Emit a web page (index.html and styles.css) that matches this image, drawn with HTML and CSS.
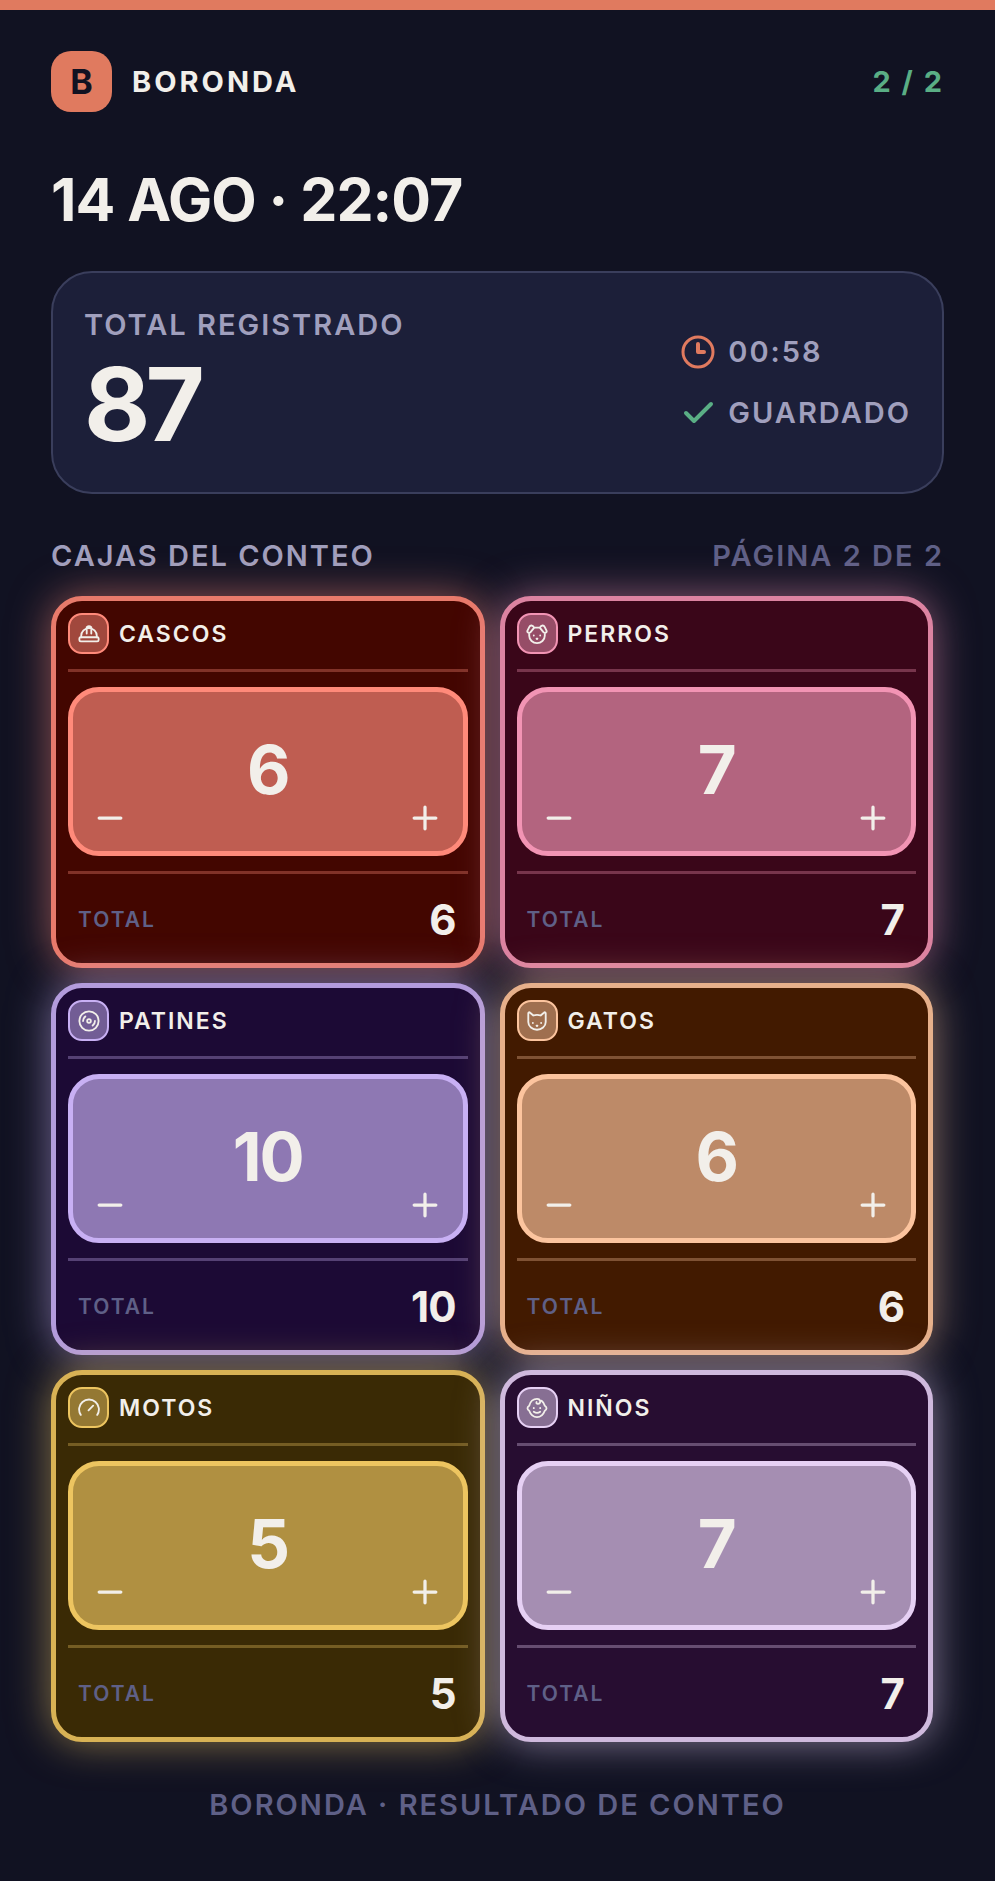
FILE: index.html
```html
<!DOCTYPE html>
<html lang="es">
<head>
    <meta charset="UTF-8">
    <meta name="viewport" content="width=device-width, initial-scale=1.0">
    <title>Boronda - Resultado de conteo</title>
    <link rel="stylesheet" href="styles.css">
</head>
<body>

<div class="page">
    <header class="header">
        <div class="brand">
            <span class="logo">B</span>
            <span class="brand-name">BORONDA</span>
        </div>
        <span class="page-count">2 / 2</span>
    </header>

    <h1>14 AGO · 22:07</h1>

    <section class="summary">
        <div>
            <div class="label">TOTAL REGISTRADO</div>
            <div class="summary-total">87</div>
        </div>
        <div class="meta">
            <div class="meta-row">
                <svg class="meta-icon clock" viewBox="0 0 34 34"><circle cx="17" cy="17" r="15"/><path d="M17 9v8h6"/></svg>
                <span>00:58</span>
            </div>
            <div class="meta-row">
                <svg class="meta-icon check" viewBox="0 0 34 34"><path d="M5 17l8 8L30 8"/></svg>
                <span>GUARDADO</span>
            </div>
        </div>
    </section>

    <div class="section-head">
        <h2>CAJAS DEL CONTEO</h2>
        <span>PÁGINA 2 DE 2</span>
    </div>

    <main class="grid">
        <article class="card red">
            <div class="card-head">
                <span class="card-icon"><svg viewBox="0 0 24 24"><rect x="1.5" y="15.5" width="21" height="4.5" rx="1.5"/><path d="M3.500 15.500v-1.500a8.500 8.500 0 0 1 17 0v1.500M9.500 11.500V4.500q2.500-2 5 0v7"/></svg></span>
                <h3>CASCOS</h3>
            </div>
            <div class="counter">
                <span class="count">6</span>
                <button type="button" class="minus" aria-label="Restar cascos"><svg viewBox="0 0 24 24"><path d="M2 12h20"/></svg></button>
                <button type="button" class="plus" aria-label="Sumar cascos"><svg viewBox="0 0 24 24"><path d="M2 12h20M12 2v20"/></svg></button>
            </div>
            <div class="card-total"><span>TOTAL</span><strong>6</strong></div>
        </article>

        <article class="card pink">
            <div class="card-head">
                <span class="card-icon"><svg viewBox="0 0 24 24"><path d="M9 5h6M9 5C7 1.500 4.500 2.500 3.500 4.500L1.500 8.500c-.5 2 2 3 3.500 1.500L9 5M15 5c2-3.500 4.500-2.500 5.500-.5l2 4c.5 2-2 3-3.500 1.500L15 5M3.500 11v3c0 4.500 4 8 8.500 8s8.500-3.500 8.500-8v-3"/><path d="M8.500 13.500v.2M15.500 13.500v.2M11.500 17h1l-.5.5z"/></svg></span>
                <h3>PERROS</h3>
            </div>
            <div class="counter">
                <span class="count">7</span>
                <button type="button" class="minus" aria-label="Restar perros"><svg viewBox="0 0 24 24"><path d="M2 12h20"/></svg></button>
                <button type="button" class="plus" aria-label="Sumar perros"><svg viewBox="0 0 24 24"><path d="M2 12h20M12 2v20"/></svg></button>
            </div>
            <div class="card-total"><span>TOTAL</span><strong>7</strong></div>
        </article>

        <article class="card purple">
            <div class="card-head">
                <span class="card-icon"><svg viewBox="0 0 24 24"><circle cx="12" cy="12" r="10.500"/><circle cx="12" cy="12" r="2"/><path d="M5.500 12Q5.500 9 8 7M18.500 12q0 3-2.500 5"/></svg></span>
                <h3>PATINES</h3>
            </div>
            <div class="counter">
                <span class="count">10</span>
                <button type="button" class="minus" aria-label="Restar patines"><svg viewBox="0 0 24 24"><path d="M2 12h20"/></svg></button>
                <button type="button" class="plus" aria-label="Sumar patines"><svg viewBox="0 0 24 24"><path d="M2 12h20M12 2v20"/></svg></button>
            </div>
            <div class="card-total"><span>TOTAL</span><strong>10</strong></div>
        </article>

        <article class="card orange">
            <div class="card-head">
                <span class="card-icon"><svg viewBox="0 0 24 24"><path d="M2.500 13V3.500c0-1 1-1.500 2-.5l3.500 3q4-1.500 8 0l3.500-3c1-1 2-.5 2 .5V13c0 5-4.500 8.500-9.500 8.500S2.500 18 2.500 13z"/><path d="M7.500 14v.2M16.500 14v.2M11.500 17h1l-.5.5z"/></svg></span>
                <h3>GATOS</h3>
            </div>
            <div class="counter">
                <span class="count">6</span>
                <button type="button" class="minus" aria-label="Restar gatos"><svg viewBox="0 0 24 24"><path d="M2 12h20"/></svg></button>
                <button type="button" class="plus" aria-label="Sumar gatos"><svg viewBox="0 0 24 24"><path d="M2 12h20M12 2v20"/></svg></button>
            </div>
            <div class="card-total"><span>TOTAL</span><strong>6</strong></div>
        </article>

        <article class="card yellow">
            <div class="card-head">
                <span class="card-icon"><svg viewBox="0 0 24 24"><path d="M3 19.500A10.800 10.800 0 1 1 21 19.500M11.500 14.500l5-5"/></svg></span>
                <h3>MOTOS</h3>
            </div>
            <div class="counter">
                <span class="count">5</span>
                <button type="button" class="minus" aria-label="Restar motos"><svg viewBox="0 0 24 24"><path d="M2 12h20"/></svg></button>
                <button type="button" class="plus" aria-label="Sumar motos"><svg viewBox="0 0 24 24"><path d="M2 12h20M12 2v20"/></svg></button>
            </div>
            <div class="card-total"><span>TOTAL</span><strong>5</strong></div>
        </article>

        <article class="card lilac">
            <div class="card-head">
                <span class="card-icon"><svg viewBox="0 0 24 24"><path d="M17 4c2 1.500 3 3.500 3.500 5.500 2.500 1.500 2.500 4 0 5.500C19 19 16 22 12 22s-7-3-8.500-7c-2.500-1.500-2.500-4 0-5.500C4.500 5 8 2 12 2c4.500 0 4.500 5.500 1 5.500-1.500 0-2-1-1.500-2"/><path d="M8.500 12v.2M15.500 12v.2M8.500 16q3.500 2.500 7 0"/></svg></span>
                <h3>NIÑOS</h3>
            </div>
            <div class="counter">
                <span class="count">7</span>
                <button type="button" class="minus" aria-label="Restar niños"><svg viewBox="0 0 24 24"><path d="M2 12h20"/></svg></button>
                <button type="button" class="plus" aria-label="Sumar niños"><svg viewBox="0 0 24 24"><path d="M2 12h20M12 2v20"/></svg></button>
            </div>
            <div class="card-total"><span>TOTAL</span><strong>7</strong></div>
        </article>
    </main>

    <footer>BORONDA · RESULTADO DE CONTEO</footer>
</div>

</body>
</html>
```

FILE: styles.css
```css
* {
    box-sizing: border-box;
}

body {
    margin: 0;
    background-color: #111222;
    color: #f2efea;
    font-family: Inter, sans-serif;
    font-size: 29px;
    font-weight: 600;
    line-height: 36px;
    letter-spacing: 2px;
}

h1, h2, h3 {
    margin: 0;
    font-size: inherit;
    font-weight: inherit;
}

svg {
    display: block;
    fill: none;
    stroke: currentColor;
    stroke-linecap: round;
    stroke-linejoin: round;
}

.page {
    border-top: 10px solid #e07a5f;
    padding: 41px 51px 58px;
}

.header, .brand, .summary, .section-head, .card-head, .card-total {
    display: flex;
    align-items: center;
}

.header, .summary, .section-head, .card-total {
    justify-content: space-between;
}

.brand {
    gap: 20px;
    font-weight: 700;
    letter-spacing: 3px;
}

.logo {
    display: flex;
    align-items: center;
    justify-content: center;
    width: 61px;
    height: 61px;
    border-radius: 20px;
    background-color: #e07a5f;
    color: #111222;
    font-size: 34px;
    letter-spacing: 0;
}

.page-count {
    color: #5aae85;
    font-weight: 700;
}

h1 {
    margin-top: 53px;
    font-size: 59px;
    font-weight: 700;
    line-height: 70px;
    letter-spacing: -1px;
}

/* Summary */
.summary {
    margin-top: 36px;
    padding: 34px 31px 37px;
    border: 2px solid #3a3e5c;
    border-radius: 41px;
    background-color: #1c1f39;
    color: #a09fbd;
}

.summary-total {
    margin-top: 10px;
    color: #f2efea;
    font-size: 102px;
    font-weight: 700;
    line-height: 102px;
    letter-spacing: -5px;
}

.meta {
    display: flex;
    flex-direction: column;
    gap: 25px;
    padding-top: 2px;
}

.meta-row {
    display: flex;
    align-items: center;
    gap: 13px;
}

.meta-icon {
    width: 34px;
    height: 34px;
    stroke-width: 3;
}

.meta-icon path {
    stroke-width: 4;
}

.clock {
    color: #e07a5f;
}

.check {
    color: #5aae85;
}

.section-head {
    margin-top: 44px;
    color: #5f6087;
}

.section-head h2 {
    color: #a09fbd;
}

/* Cards */
.grid {
    display: grid;
    grid-template-columns: 1fr 1fr;
    gap: 15px;
    margin: 22px 11px 0 0;
}

.card {
    padding: 12px 12px 0;
    border: 5px solid color-mix(in srgb, var(--accent) 88%, var(--base));
    border-radius: 31px;
    background-color: var(--base);
    box-shadow: 0 0 41px color-mix(in srgb, var(--accent) 55%, transparent);
}

.red { --accent: #ff8a7a; --base: #430600; }
.pink { --accent: #f294b4; --base: #3a0619; }
.purple { --accent: #c8b0f4; --base: #1c0a35; }
.orange { --accent: #fcc49e; --base: #421a00; }
.yellow { --accent: #edc560; --base: #3a2a05; }
.lilac { --accent: #e6d0f4; --base: #270d31; }

.card-head {
    gap: 10px;
    padding-bottom: 15px;
    border-bottom: 3px solid color-mix(in srgb, var(--accent) 33%, var(--base));
    font-size: 23px;
}

.card-icon {
    display: flex;
    align-items: center;
    justify-content: center;
    width: 41px;
    height: 41px;
    border: 2px solid var(--accent);
    border-radius: 14px;
    background-color: color-mix(in srgb, var(--accent) 50%, var(--base));
}

.card-icon svg {
    width: 22px;
    height: 22px;
    stroke-width: 2;
}

.counter {
    position: relative;
    display: flex;
    align-items: center;
    justify-content: center;
    height: 169px;
    margin: 15px 0;
    padding-bottom: 4px;
    border: 5px solid var(--accent);
    border-radius: 31px;
    background-color: color-mix(in srgb, var(--accent) 66%, var(--base));
}

.count {
    font-size: 67px;
    font-weight: 700;
    line-height: 68px;
    letter-spacing: -2px;
}

.counter button {
    position: absolute;
    bottom: 20px;
    padding: 0;
    border: none;
    background: none;
    color: #f2efea;
    cursor: pointer;
}

.counter button svg {
    width: 26px;
    height: 26px;
    stroke-width: 3;
}

.minus {
    left: 24px;
}

.plus {
    right: 25px;
}

.card-total {
    height: 92px;
    padding: 3px 12px 0 10px;
    border-top: 3px solid color-mix(in srgb, var(--accent) 33%, var(--base));
    color: #5f6087;
    font-size: 21px;
}

.card-total strong {
    color: #f2efea;
    font-size: 42px;
    font-weight: 700;
    letter-spacing: -1px;
}

footer {
    margin-top: 45px;
    color: #5f6087;
    text-align: center;
}
```
